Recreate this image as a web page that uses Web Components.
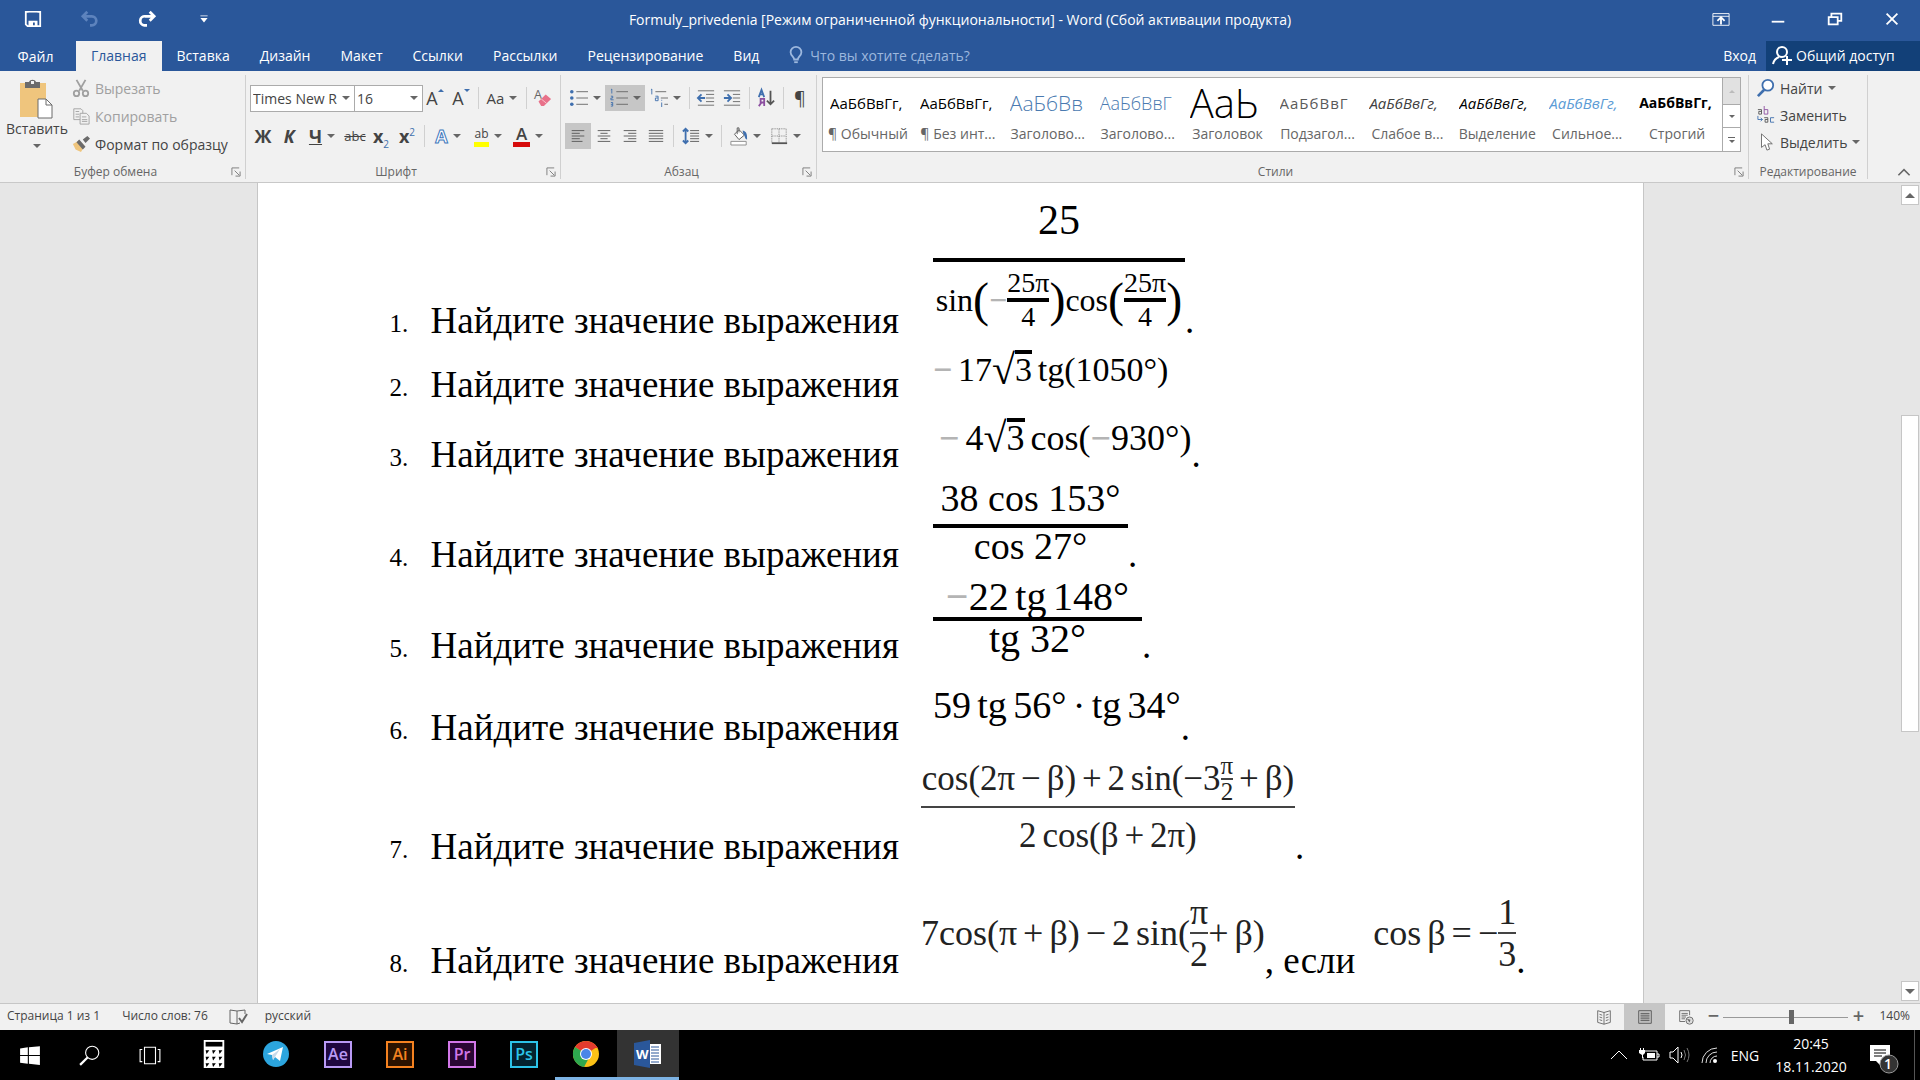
<!DOCTYPE html>
<html lang="ru">
<head>
<meta charset="utf-8">
<title>Formuly_privedenia - Word</title>
<style>
  html, body {
    margin: 0;
    height: 100%;
    overflow: hidden;
  }
  body {
    font-family: "Open Sans", "Noto Sans", sans-serif;
    font-size: 14px;
    color: #444;
  }
</style>
</head>
<body>
<word-app></word-app>

<script>
const ICONS = {
  save: '<path d="M2 2h16v16H4l-2-2z" fill="none" stroke="#fff" stroke-width="2"/><path d="M5 3h10v6H5z" fill="#2a579a"/><path d="M5 12h10v6h-3v-4h-2v4H5z" fill="#fff"/>',
  undo: '<path d="M3 7h9a5 5 0 0 1 0 10h-2M7 2L2 7l5 5" fill="none" stroke="#5d83bd" stroke-width="3"/>',
  redo: '<path d="M17 7H8a5 5 0 0 0-1 10h3M13 2l5 5-5 5" fill="none" stroke="#fff" stroke-width="3"/>',
  custom: '<path d="M6 6h8v1H6zM6 9h8l-4 5z" fill="#fff"/>',
  ribbonopt: '<path d="M1 4h18v13H1zM1 7h18" fill="none" stroke="#fff"/><path d="M10 16V9M6 12l4-4 4 4" fill="none" stroke="#fff" stroke-width="2"/>',
  min: '<path d="M3 12h14v2H3z" fill="#fff"/>',
  restore: '<path d="M3 8h10v8H3zM6 8V4h11v8h-4" fill="none" stroke="#fff" stroke-width="2"/>',
  close: '<path d="M4 4l12 12M16 4L4 16" stroke="#fff" stroke-width="2"/>',
  bulb: '<path d="M8 15c0-3-4-4-4-8a6 6 0 0 1 12 0c0 4-4 5-4 8z" fill="none" stroke="#9db8de" stroke-width="2"/><path d="M8 17h4v2H8z" fill="#9db8de"/>',
  person: '<circle cx="10" cy="7" r="5" fill="none" stroke="#fff" stroke-width="2"/><path d="M1 19c1-4 3-6 6-7M15 11v9M10 15h10" fill="none" stroke="#fff" stroke-width="2"/>',
  paste: '<path d="M3 4h26v34H3z" fill="#efc57d" /><path d="M8 3h4c1-3 6-3 7 0h4v6H8z" fill="#6b6b6b"/><path d="M14 2h3v3h-3z" fill="#f1f1f1"/><path d="M21 20h8l6 6v13H21z" fill="#fff" stroke="#6b6b6b"/><path d="M29 20v6h6" fill="none" stroke="#6b6b6b"/>',
  cut: '<g fill="none" stroke="#a0a0a0" stroke-width="2"><path d="M5 1l7 12M15 1L8 13"/><circle cx="5" cy="16" r="3"/><circle cx="15" cy="16" r="3"/></g>',
  copy: '<g fill="#f1f1f1" stroke="#a0a0a0"><path d="M2 2h8l2 2v10H2z"/><path d="M9 7h7l3 3v9H9z"/><path d="M4 5h4M4 8h4M4 11h4M11 11h5M11 14h6M11 16h6"/></g>',
  brush: '<path d="M1 10l7-4 6 6-4 7-6-3z" fill="#efc57d"/><path d="M8 5l7 8-3 3-7-8zM12 5l5-4 3 3-5 5z" fill="#6b6b6b"/>',
  clear: '<text x="0" y="11" font-size="14" fill="#666">A</text><path d="M5 14l8-8 6 5-8 8H8z" fill="#e8718a"/><path d="M8 11l6 5" stroke="#f8c8d0"/>',
  bullets: '<g fill="#3f6fae"><circle cx="2" cy="3" r="2"/><circle cx="2" cy="10" r="2"/><circle cx="2" cy="17" r="2"/></g><path d="M7 3h13M7 10h13M7 17h13" stroke="#666"/>',
  numbers: '<path d="M2 0v5M1 1l1-1M1 8h2v2H1v2h3M1 15h2v4H1M1 17h2" fill="none" stroke="#3f6fae"/><path d="M7 3h13M7 10h13M7 17h13" stroke="#666"/>',
  multi: '<path d="M2 0v6M1 1l1-1M6 8h3v5H6v-3h3M13 15v5M13 12v1" fill="none" stroke="#3f6fae"/><path d="M6 3h12M12 10h8M16 17h4" stroke="#666"/>',
  outdent: '<path d="M1 2h18M10 6h9M10 10h9M10 14h9M1 18h18" stroke="#666"/><path d="M9 10H2M5 6l-4 4 4 4" stroke="#3f6fae" stroke-width="2" fill="none"/>',
  indent: '<path d="M1 2h18M11 6h8M11 10h8M11 14h8M1 18h18" stroke="#666"/><path d="M1 10h7M5 6l4 4-4 4" stroke="#3f6fae" stroke-width="2" fill="none"/>',
  sort: '<path d="M2 9l3-8 3 8M3 6h4" stroke="#3f6fae" stroke-width="2" fill="none"/><path d="M8 19v-8H4v4h4M5 15l-3 4" stroke="#8c4fa0" stroke-width="2" fill="none"/><path d="M15 2v15M11 13l4 4 4-4" stroke="#555" stroke-width="2" fill="none"/>',
  left: '<path d="M3 4h14M3 7h9M3 10h14M3 13h9M3 16h12" stroke="#555"/>',
  center: '<path d="M3 4h14M6 7h8M3 10h14M6 13h8M3 16h14" stroke="#555"/>',
  right: '<path d="M3 4h14M8 7h9M3 10h14M8 13h9M3 16h14" stroke="#555"/>',
  justify: '<path d="M2 4h16M2 7h16M2 10h16M2 13h16M2 16h16" stroke="#555"/>',
  spacing: '<path d="M4 2v16M1 5l3-3 3 3M1 15l3 3 3-3" stroke="#3f6fae" stroke-width="2" fill="none"/><path d="M9 4h10M9 7h10M9 10h10M9 13h10M9 16h10" stroke="#555"/>',
  shading: '<path d="M5 8l5-5 6 6-6 5z" fill="#fff" stroke="#555"/><path d="M8 8V1h2v5" fill="none" stroke="#555"/><path d="M14 4c5 1 5 5 5 10-3-1-2-4-4-6z" fill="#3f6fae"/><path d="M1 16h17v4H1z" fill="#fff" stroke="#888"/>',
  borders: '<path d="M2 2h16v16M2 2v16M10 2v16M2 10h16" fill="none" stroke="#777" stroke-dasharray="1 1"/><path d="M2 18h17" stroke="#555" stroke-width="2"/>',
  find: '<circle cx="12" cy="7" r="6" fill="#fff" stroke="#3f6fae" stroke-width="2"/><path d="M8 12l-7 7" stroke="#3f6fae" stroke-width="3"/>',
  replace: '<g fill="none"><path d="M1 4h4v5H2V6h3" stroke="#555"/><path d="M8 0v9h4V4H8" stroke="#8c4fa0"/><path d="M8 13h4v5H9v-3h3" stroke="#555"/><path d="M19 13h-4v5h4M1 11v4h5M4 13l2 2-2 2" stroke="#3f6fae"/></g>',
  cursor: '<path d="M5 1v15l4-3 2 6 3-1-2-6h5z" fill="#fff" stroke="#666"/>',
  launcher: '<path d="M1 9V1h8" fill="none" stroke="#777"/><path d="M4 4l5 5M10 5v5H5" fill="none" stroke="#777"/>',
  caretup: '<path d="M3 14l7-7 7 7" fill="none" stroke="#666" stroke-width="2"/>',
  proof: '<path d="M9 4L2 3v13l7 1zM9 4l8-1v4M9 17l3-1" fill="none" stroke="#666"/><path d="M11 11l3 4 5-8" fill="none" stroke="#666" stroke-width="2"/>',
  read: '<path d="M10 5L3 3v13l7 2 7-2V3zM10 5v13M5 7l3 1M5 10l3 1M5 13l3 1M15 7l-3 1M15 10l-3 1M15 13l-3 1" fill="none" stroke="#666"/>',
  print: '<path d="M3 3h14v14H3zM5 6h10M5 8h10M5 10h10M5 12h10M5 14h10" fill="none" stroke="#555"/>',
  web: '<path d="M14 8V3H3v12h6M5 6h7M5 8h7M5 10h5M5 12h4" fill="none" stroke="#666"/><circle cx="14" cy="14" r="4" fill="#ddd" stroke="#666"/><path d="M11 12l4 1-1 3z" fill="#666"/>',
  start: '<path d="M1 4l7-1v7H1zM9 3l10-1v8H9zM1 11h7v7l-7-1zM9 11h10v8L9 18z" fill="#fff"/>',
  search: '<circle cx="12" cy="8" r="6" fill="none" stroke="#fff"/><path d="M8 12l-7 7" stroke="#fff" stroke-width="2"/>',
  tasks: '<path d="M5 3h10v15H5zM3 5H1v11h2M17 5h2v11h-2" fill="none" stroke="#fff"/>',
  calc: '<path d="M4 0h22v30H4z" fill="#fff"/><path d="M6 2h18v5H6z" fill="#000"/><path d="M6 11h4l-3 4zM13 11h4l-3 4zM20 11h4l-3 4zM6 18h4l-3 4zM13 18h4l-3 4zM20 18h4l-3 4zM6 25h4l-3 4zM13 25h4l-3 4zM20 25h4l-3 4z" fill="#000"/>',
  telegram: '<circle cx="14" cy="14" r="13" fill="#2ca5de"/><path d="M5 14l16-7-3 14-5-4-2 3-1-5z" fill="#fff"/><path d="M10 15l8-6-5 8-2 3z" fill="#c8daea"/>',
  chrome: '<circle cx="14" cy="14" r="13" fill="#fbc116"/><path d="M14 14L3 7a13 13 0 0 1 22 0z" fill="#e33b2e"/><path d="M14 14L3 7a13 13 0 0 0 9 20l6-11z" fill="#2ea84f"/><path d="M14 8h12L24 6 8 5z" fill="#e33b2e"/><circle cx="14" cy="14" r="6" fill="#fff"/><circle cx="14" cy="14" r="5" fill="#4a86e8"/>',
  word: '<path d="M14 4h13v20H14z" fill="#fff"/><path d="M17 7h8M17 10h8M17 13h8M17 16h8M17 19h8M17 22h8" stroke="#2a579a"/><path d="M0 3l16-3v28L0 25z" fill="#2a579a"/><text x="2" y="19" font-size="13" font-weight="700" fill="#fff">W</text>',
  battery: '<path d="M6 6h12v9H4v-3M18 9h2v3h-2" fill="none" stroke="#fff"/><path d="M8 8h8v5H8zM0 5h6v3l-2 2v3H3v-3L0 8zM1 3h1v2H1zM4 3h1v2H4z" fill="#fff"/>',
  volume: '<path d="M1 7h3l5-5v16l-5-5H1z" fill="none" stroke="#fff"/><path d="M12 7q2 3 0 6" fill="none" stroke="#fff"/><path d="M15 5q3 5 0 10M18 3q4 7 0 14" fill="none" stroke="#777"/>',
  wifi: '<g fill="none" stroke="#ddd"><path d="M3 18A15 15 0 0 1 18 3M7 18A11 11 0 0 1 18 7M11 18a7 7 0 0 1 7-7"/></g><circle cx="16" cy="16" r="2" fill="#fff"/>',
  traycaret: '<path d="M2 14l8-8 8 8" fill="none" stroke="#fff"/>',
  notes: '<path d="M0 1h20v16h-9v5l-5-5H0z" fill="#fff"/><path d="M4 6h12M4 9h12M4 12h8" stroke="#000"/><circle cx="19" cy="20" r="9" fill="#333" stroke="#999"/>',
};

// Inline picture, size comes from --icon (20px by default)
class UiIcon extends HTMLElement {
  constructor() {
    super();
    this.attachShadow({ mode: 'open' });
  }

  connectedCallback() {
    const box = this.getAttribute('box') || '20';
    this.shadowRoot.innerHTML = `
      <style>
        :host { display: inline-flex; flex: none; width: var(--icon, 20px); height: var(--icon, 20px); }
        svg { width: 100%; height: 100%; display: block; overflow: visible; font-family: inherit; }
      </style>
      <svg viewBox="0 0 ${box} ${box}" aria-hidden="true">${ICONS[this.getAttribute('name')]}</svg>
    `;
  }
}
customElements.define('ui-icon', UiIcon);

class ToolButton extends HTMLElement {
  constructor() {
    super();
    this.attachShadow({ mode: 'open' });
    this.shadowRoot.innerHTML = `
      <style>
        :host { display: inline-flex; flex: none; --icon: 18px; }
        button {
          display: flex;
          align-items: center;
          justify-content: center;
          width: 26px;
          height: 26px;
          padding: 0;
          border: 0;
          background: none;
          font: inherit;
          font-size: 18px;
          color: inherit;
        }
        :host([arrow]) button { width: 40px; gap: 5px; }
        :host([active]) button { background: #c6c6c6; }
        :host([wide]) button { width: auto; font-size: 14px; gap: 5px; }
        :host([disabled]) button { color: #a0a0a0; }
        i { display: none; border: 4px solid transparent; border-top-color: #666; border-bottom: 0; }
        :host([arrow]) i { display: block; }
      </style>
      <button type="button"><slot></slot><i></i></button>
    `;
  }

  connectedCallback() {
    const label = this.getAttribute('label');
    const button = this.shadowRoot.querySelector('button');
    if (label) button.setAttribute('aria-label', label);
    button.disabled = this.hasAttribute('disabled');
  }
}
customElements.define('tool-button', ToolButton);

class RibbonGroup extends HTMLElement {
  constructor() {
    super();
    this.attachShadow({ mode: 'open' });
    this.shadowRoot.innerHTML = `
      <style>
        :host {
          display: flex;
          flex-direction: column;
          flex: none;
          box-sizing: border-box;
          margin: 4px 0 3px;
          border-right: 1px solid #d0d0d0;
        }
        .body { flex: 1; }
        footer { display: flex; align-items: center; height: 14px; line-height: 14px; font-size: 12px; color: #666; }
        footer span { flex: 1; text-align: center; }
        ui-icon { --icon: 10px; margin-right: 4px; }
        :host([plain]) ui-icon { display: none; }
      </style>
      <div class="body"><slot></slot></div>
      <footer><span></span><ui-icon name="launcher" box="11"></ui-icon></footer>
    `;
  }

  connectedCallback() {
    this.shadowRoot.querySelector('span').textContent = this.getAttribute('label');
  }
}
customElements.define('ribbon-group', RibbonGroup);

class StyleTile extends HTMLElement {
  constructor() {
    super();
    this.attachShadow({ mode: 'open' });
  }

  connectedCallback() {
    this.shadowRoot.innerHTML = `
      <style>
        :host { display: block; flex: 1 1 90px; min-width: 0; color: #000; font-size: 15px; }
        button {
          width: 100%;
          height: 100%;
          padding: 0 4px;
          border: 0;
          background: none;
          font: inherit;
          letter-spacing: inherit;
          color: inherit;
        }
        b { display: block; height: 42px; line-height: 42px; margin: 3px 3px 0; overflow: hidden; white-space: nowrap; font-weight: inherit; text-align: left; }
        span { display: block; height: 26px; line-height: 20px; font-size: 14px; font-weight: 400; font-style: normal; letter-spacing: normal; color: #666; white-space: nowrap; }
      </style>
      <button type="button"><b><slot></slot></b><span>${this.getAttribute('name')}</span></button>
    `;
  }
}
customElements.define('style-tile', StyleTile);

class TitleBar extends HTMLElement {
  constructor() {
    super();
    this.attachShadow({ mode: 'open' });
    this.shadowRoot.innerHTML = `
      <style>
        :host { display: grid; grid-template-columns: 1fr auto 1fr; align-items: center; height: 41px; background: #2a579a; color: #fff; }
        button { border: 0; padding: 0; background: none; --icon: 18px; width: 57px; height: 38px; }
        .quick { display: flex; padding-left: 4px; }
        .window { display: flex; justify-content: flex-end; }
        h1 { margin: 0 0 2px; font-size: 14px; font-weight: 400; white-space: nowrap; }
      </style>
      <div class="quick">
        <button aria-label="Сохранить"><ui-icon name="save"></ui-icon></button>
        <button aria-label="Отменить"><ui-icon name="undo"></ui-icon></button>
        <button aria-label="Повторить"><ui-icon name="redo"></ui-icon></button>
        <button aria-label="Настройка панели"><ui-icon name="custom"></ui-icon></button>
      </div>
      <h1>Formuly_privedenia [Режим ограниченной функциональности] - Word (Сбой активации продукта)</h1>
      <div class="window">
        <button aria-label="Параметры ленты"><ui-icon name="ribbonopt"></ui-icon></button>
        <button aria-label="Свернуть"><ui-icon name="min"></ui-icon></button>
        <button aria-label="Восстановить"><ui-icon name="restore"></ui-icon></button>
        <button aria-label="Закрыть"><ui-icon name="close"></ui-icon></button>
      </div>
    `;
  }
}
customElements.define('title-bar', TitleBar);

class RibbonTabs extends HTMLElement {
  constructor() {
    super();
    this.attachShadow({ mode: 'open' });
    this.shadowRoot.innerHTML = `
      <style>
        :host { display: flex; height: 30px; background: #2a579a; color: #fff; }
        button { border: 0; padding: 0 15px 2px; background: none; font: inherit; color: inherit; white-space: nowrap; }
        .file { width: 76px; padding: 0 22px 0 17px; }
        .active { background: #f1f1f1; color: #2a579a; }
        label { display: flex; align-items: center; gap: 5px; flex: 1; padding: 0 0 2px 13px; --icon: 18px; }
        input { width: 200px; border: 0; padding: 0; background: none; font: inherit; color: #fff; }
        input::placeholder { color: #9db8de; opacity: 1; }
        .signin { padding: 0 10px 2px; }
        .share { display: flex; align-items: center; gap: 4px; width: 154px; padding: 0 6px 2px; background: #124078; }
      </style>
      <button class="file">Файл</button>
      <button class="active">Главная</button>
      <button>Вставка</button>
      <button>Дизайн</button>
      <button>Макет</button>
      <button>Ссылки</button>
      <button>Рассылки</button>
      <button>Рецензирование</button>
      <button>Вид</button>
      <label><ui-icon name="bulb"></ui-icon><input aria-label="Помощник" placeholder="Что вы хотите сделать?"></label>
      <button class="signin">Вход</button>
      <button class="share"><ui-icon name="person"></ui-icon>Общий доступ</button>
    `;
  }
}
customElements.define('ribbon-tabs', RibbonTabs);

class RibbonPanel extends HTMLElement {
  constructor() {
    super();
    this.attachShadow({ mode: 'open' });
    this.shadowRoot.innerHTML = `
      <style>
        :host { display: flex; height: 111px; background: #f1f1f1; border-bottom: 1px solid #c8c8c8; }
        .row { display: flex; align-items: center; height: 26px; margin-top: 10px; padding-left: 4px; }
        .row + .row { margin-top: 12px; }
        .sep { width: 1px; height: 22px; margin: 0 3px 0 4px; background: #d0d0d0; }

        .clipboard { width: 246px; }
        .clip { display: flex; }
        .paste {
          display: flex;
          flex-direction: column;
          align-items: center;
          width: 72px;
          padding: 4px 0 0 2px;
          border: 0;
          background: none;
          font: inherit;
          color: inherit;
          --icon: 40px;
        }
        .paste i { margin-top: 6px; border: 4px solid transparent; border-top-color: #666; border-bottom: 0; }
        .col { display: flex; flex-direction: column; align-items: flex-start; gap: 2px; }

        .font { width: 315px; }
        select {
          height: 27px;
          box-sizing: border-box;
          border: 1px solid #ababab;
          padding: 0 4px 0 2px;
          appearance: none;
          border-radius: 0;
          background: #fff;
          font: inherit;
          color: #444;
        }
        .combo { position: relative; display: flex; margin-right: -1px; }
        .combo::after { content: ""; position: absolute; right: 5px; top: 11px; border: 4px solid transparent; border-top-color: #666; border-bottom: 0; }
        .face { width: 105px; }
        .size { width: 69px; }
        sup, sub { font-size: 10px; color: #3f6fae; line-height: 0; }
        .case { font-size: 15px; }
        .up, .down { align-self: flex-start; margin-top: 4px; border: 3px solid transparent; border-top: 0; border-bottom-color: #3f6fae; }
        .down { border-top: 3px solid #3f6fae; border-bottom: 0; }
        .strike { font-size: 13px; text-decoration: line-through; }
        .outline { color: #fff; -webkit-text-stroke: 1px #3f79bd; font-weight: 700; }
        .mark { font-size: 12px; line-height: 16px; border-bottom: 5px solid #ff0; }
        .tint { font-size: 17px; line-height: 17px; padding: 0 3px; font-weight: 600; border-bottom: 5px solid #d60b0b; }

        .para { width: 256px; }
        .styles { flex: 1 1 0; min-width: 0; }
        .gallery { display: flex; height: 75px; margin: 2px 7px 0 5px; background: #fff; border: 1px solid #ababab; box-sizing: border-box; }
        .scroll { display: grid; grid-template-rows: 26px 23px 1fr; width: 17px; border-left: 1px solid #ababab; }
        .scroll button { border: 0; border-top: 1px solid #ababab; padding: 0; background: #fff; color: #666; display: grid; place-content: center; justify-items: center; }
        .scroll button:first-child { background: #e1e1e1; border-top: 0; }
        .scroll i { border: 3px solid transparent; border-top-color: #666; border-bottom: 0; }
        .scroll button:first-child i { border-top: 0; border-bottom: 3px solid #bbb; }
        .scroll button:last-child::before { content: ""; width: 7px; height: 1px; margin-bottom: 2px; background: #666; }

        .edit { width: 119px; }
        .edit .col { padding: 0 0 0 8px; gap: 1px; }
        .collapse { flex: none; width: 52px; display: flex; align-items: flex-end; justify-content: center; padding: 0 0 2px 20px; box-sizing: border-box; border: 0; background: none; --icon: 16px; }
      </style>

      <ribbon-group class="clipboard" label="Буфер обмена">
        <div class="clip">
          <button class="paste"><ui-icon name="paste" box="40"></ui-icon>Вставить<i></i></button>
          <div class="col">
            <tool-button wide disabled><ui-icon name="cut"></ui-icon>Вырезать</tool-button>
            <tool-button wide disabled><ui-icon name="copy"></ui-icon>Копировать</tool-button>
            <tool-button wide><ui-icon name="brush"></ui-icon>Формат по образцу</tool-button>
          </div>
        </div>
      </ribbon-group>

      <ribbon-group class="font" label="Шрифт">
        <div class="row">
          <span class="combo"><select class="face" aria-label="Шрифт"><option>Times New R</option></select></span>
          <span class="combo"><select class="size" aria-label="Размер"><option>16</option></select></span>
          <tool-button label="Увеличить">A<span class="up"></span></tool-button>
          <tool-button label="Уменьшить">A<span class="down"></span></tool-button>
          <span class="sep"></span>
          <tool-button arrow label="Регистр"><span class="case">Aa</span></tool-button>
          <span class="sep"></span>
          <tool-button label="Очистить формат"><ui-icon name="clear"></ui-icon></tool-button>
        </div>
        <div class="row">
          <tool-button label="Полужирный"><b>Ж</b></tool-button>
          <tool-button label="Курсив"><b><i>К</i></b></tool-button>
          <tool-button arrow label="Подчеркнутый"><b><u>Ч</u></b></tool-button>
          <tool-button label="Зачеркнутый"><span class="strike">abc</span></tool-button>
          <tool-button label="Подстрочный"><span><b>x</b><sub>2</sub></span></tool-button>
          <tool-button label="Надстрочный"><span><b>x</b><sup>2</sup></span></tool-button>
          <span class="sep"></span>
          <tool-button arrow label="Эффекты"><span class="outline">A</span></tool-button>
          <tool-button arrow label="Выделение цветом"><span class="mark">ab</span></tool-button>
          <tool-button arrow label="Цвет текста"><span class="tint">A</span></tool-button>
        </div>
      </ribbon-group>

      <ribbon-group class="para" label="Абзац">
        <div class="row">
          <tool-button arrow label="Маркеры"><ui-icon name="bullets"></ui-icon></tool-button>
          <tool-button arrow active label="Нумерация"><ui-icon name="numbers"></ui-icon></tool-button>
          <tool-button arrow label="Многоуровневый список"><ui-icon name="multi"></ui-icon></tool-button>
          <span class="sep"></span>
          <tool-button label="Уменьшить отступ"><ui-icon name="outdent"></ui-icon></tool-button>
          <tool-button label="Увеличить отступ"><ui-icon name="indent"></ui-icon></tool-button>
          <span class="sep"></span>
          <tool-button label="Сортировка"><ui-icon name="sort"></ui-icon></tool-button>
          <span class="sep"></span>
          <tool-button label="Все знаки">¶</tool-button>
        </div>
        <div class="row">
          <tool-button active label="По левому краю"><ui-icon name="left"></ui-icon></tool-button>
          <tool-button label="По центру"><ui-icon name="center"></ui-icon></tool-button>
          <tool-button label="По правому краю"><ui-icon name="right"></ui-icon></tool-button>
          <tool-button label="По ширине"><ui-icon name="justify"></ui-icon></tool-button>
          <span class="sep"></span>
          <tool-button arrow label="Интервал"><ui-icon name="spacing"></ui-icon></tool-button>
          <span class="sep"></span>
          <tool-button arrow label="Заливка"><ui-icon name="shading"></ui-icon></tool-button>
          <tool-button arrow label="Границы"><ui-icon name="borders"></ui-icon></tool-button>
        </div>
      </ribbon-group>

      <ribbon-group class="styles" label="Стили">
        <div class="gallery">
          <style-tile name="¶ Обычный">АаБбВвГг,</style-tile>
          <style-tile name="¶ Без инт...">АаБбВвГг,</style-tile>
          <style-tile name="Заголово..." style="color:#4a7ab0;font-size:21px;font-weight:300">АаБбВв</style-tile>
          <style-tile name="Заголово..." style="color:#4a7ab0;font-size:18px;font-weight:300">АаБбВвГ</style-tile>
          <style-tile name="Заголовок" style="font-size:40px;font-weight:300">АаЬ</style-tile>
          <style-tile name="Подзагол..." style="color:#5a5a5a;letter-spacing:1px">АаБбВвГ</style-tile>
          <style-tile name="Слабое в..." style="color:#404040;font-style:italic">АаБбВвГг,</style-tile>
          <style-tile name="Выделение" style="font-style:italic">АаБбВвГг,</style-tile>
          <style-tile name="Сильное..." style="color:#5b9bd5;font-style:italic">АаБбВвГг,</style-tile>
          <style-tile name="Строгий" style="font-size:14px;font-weight:700">АаБбВвГг,</style-tile>
          <div class="scroll">
            <button aria-label="Вверх"><i></i></button>
            <button aria-label="Вниз"><i></i></button>
            <button aria-label="Еще"><i></i></button>
          </div>
        </div>
      </ribbon-group>

      <ribbon-group class="edit" label="Редактирование" plain>
        <div class="col">
          <tool-button wide arrow><ui-icon name="find"></ui-icon>Найти</tool-button>
          <tool-button wide><ui-icon name="replace"></ui-icon>Заменить</tool-button>
          <tool-button wide arrow><ui-icon name="cursor"></ui-icon>Выделить</tool-button>
        </div>
      </ribbon-group>
      <button class="collapse" aria-label="Свернуть ленту"><ui-icon name="caretup"></ui-icon></button>
    `;
  }
}
customElements.define('ribbon-panel', RibbonPanel);

// One line of a formula: everything is centred on the fraction bar
class MathLine extends HTMLElement {
  constructor() {
    super();
    this.attachShadow({ mode: 'open' });
    this.shadowRoot.innerHTML = `
      <style>
        :host { display: inline-flex; align-items: center; justify-content: center; white-space: pre; line-height: 40px; }
        ::slotted(s) { text-decoration: none; color: #b4b4b4; font-weight: 700; }
        ::slotted(big) { font-size: 48px; }
      </style>
      <slot></slot>
    `;
  }
}
customElements.define('math-line', MathLine);

class MathFrac extends HTMLElement {
  constructor() {
    super();
    this.attachShadow({ mode: 'open' });
    this.shadowRoot.innerHTML = `
      <style>
        :host { display: inline-flex; flex-direction: column; align-items: stretch; text-align: center; line-height: var(--line, 30px); }
        hr { width: 100%; height: var(--bar, 2px); margin: var(--above, 0) 0 var(--below, 0); border: 0; background: var(--ink, #000); }
      </style>
      <slot name="top"></slot><hr><slot name="bottom"></slot>
    `;
  }
}
customElements.define('math-frac', MathFrac);

class MathRoot extends HTMLElement {
  constructor() {
    super();
    this.attachShadow({ mode: 'open' });
    this.shadowRoot.innerHTML = `
      <style>
        :host { display: inline-flex; align-items: flex-start; }
        i { font-style: normal; font-size: 42px; line-height: 40px; }
        span { border-top: 4px solid #000; line-height: 32px; }
      </style>
      <i>√</i><span><slot></slot></span>
    `;
  }
}
customElements.define('math-root', MathRoot);

class TaskRow extends HTMLElement {
  constructor() {
    super();
    this.attachShadow({ mode: 'open' });
    this.shadowRoot.innerHTML = `
      <style>
        :host { display: flex; align-items: flex-end; min-height: var(--step); line-height: 42px; white-space: pre; }
        .no { width: 41px; flex: none; font-size: 25px; line-height: 36px; }
        ::slotted(math-line), ::slotted(math-frac) { margin-bottom: var(--drop, 8px); font-size: var(--size, 34px); margin-left: 34px; }
        ::slotted(.near) { margin-left: 22px; }
        ::slotted(.next) { margin-left: 18px; }
      </style>
      <span class="no"></span><span>Найдите значение выражения</span><slot></slot>
    `;
  }

  connectedCallback() {
    this.shadowRoot.querySelector('.no').textContent = `${this.getAttribute('no')}.`;
  }
}
customElements.define('task-row', TaskRow);

class WordDocument extends HTMLElement {
  constructor() {
    super();
    this.attachShadow({ mode: 'open' });
    this.shadowRoot.innerHTML = `
      <style>
        :host { display: flex; flex: 1; min-height: 0; background: #e6e6e6; }
        .area { flex: 1; display: flex; justify-content: center; overflow: hidden; }
        .page {
          flex: none;
          width: 73%;
          box-sizing: border-box;
          padding-left: 132px;
          background: #fff;
          border: solid #c6c6c6;
          border-width: 0 1px;
          font-family: "Liberation Serif", serif;
          font-size: 37px;
          color: #000;
        }
        .big { --bar: 4px; --line: 36px; }
        .inner { --bar: 4px; --line: 30px; --above: 0; --below: 0; font-size: 28px; }
        .thin { --bar: 2px; --ink: #444; --above: 0; --below: 0; }
        .head { font-size: 42px; }
        .grey { color: #222; }
        .bar { display: flex; flex-direction: column; width: 20px; background: #e6e6e6; }
        .bar button { height: 20px; margin: 2px 1px; border: 1px solid #c6c6c6; background: #fff; padding: 0; display: grid; place-content: center; }
        .bar i { border: 5px solid transparent; border-bottom-color: #666; border-top: 0; }
        .bar .down i { border: 5px solid transparent; border-top-color: #666; border-bottom: 0; }
        .track { flex: 1; display: grid; grid-template-rows: 27fr 41fr 32fr; }
        .thumb { grid-row: 2; margin: 0 1px; border: 1px solid #c6c6c6; background: #fff; }
      </style>
      <div class="area"><div class="page">
        <task-row no="1" style="--step:159px">
          <math-frac class="big" style="--size:32px;--drop:10px;--above:20px;--below:6px;width:252px">
            <span slot="top" class="head">25</span>
            <math-line slot="bottom">sin<big>(</big><s>−</s><math-frac class="inner"><span slot="top">25π</span><span slot="bottom">4</span></math-frac><big>)</big>cos<big>(</big><math-frac class="inner"><span slot="top">25π</span><span slot="bottom">4</span></math-frac><big>)</big></math-line>
          </math-frac><span>.</span>
        </task-row>
        <task-row no="2" style="--step:64px;--drop:16px">
          <math-line><s>−</s> 17<math-root>3</math-root> tg(1050°)</math-line>
        </task-row>
        <task-row no="3" style="--step:70px;--drop:18px;--size:36px">
          <math-line> <s>−</s> 4<math-root>3</math-root> cos(<s>−</s>930°)</math-line><span>.</span>
        </task-row>
        <task-row no="4" style="--step:100px;--drop:12px">
          <math-frac class="big" style="--size:38px;--above:8px;width:195px"><span slot="top">38 cos 153°</span><span slot="bottom">cos 27°</span></math-frac><span>.</span>
        </task-row>
        <task-row no="5" style="--step:91px;--drop:10px">
          <math-frac class="big" style="--size:40px;width:209px"><math-line slot="top"><s>−</s>22 tg 148°</math-line><span slot="bottom">tg 32°</span></math-frac><span>.</span>
        </task-row>
        <task-row no="6" style="--step:82px;--drop:24px;--size:38px">
          <math-line>59 tg 56° · tg 34°</math-line><span>.</span>
        </task-row>
        <task-row no="7" style="--step:119px;--drop:12px;--size:35px">
          <math-frac class="near grey" style="--ink:#444;--above:2px;--below:8px;width:374px">
            <math-line slot="top">cos(2π − β) + 2 sin(−3<math-frac class="thin" style="--line:24px;font-size:25px"><span slot="top">π</span><span slot="bottom">2</span></math-frac> + β)</math-line>
            <math-line slot="bottom">2 cos(β + 2π)</math-line>
          </math-frac><span>.</span>
        </task-row>
        <task-row no="8" style="--step:114px;--drop:8px;--size:36px">
          <math-line class="near grey">7cos(π + β) − 2 sin(<math-frac class="thin" style="--line:40px"><span slot="top">π</span><span slot="bottom">2</span></math-frac>+ β)</math-line><span>, если</span>
          <math-line class="next grey">cos β = −<math-frac class="thin" style="--line:40px"><span slot="top">1</span><span slot="bottom">3</span></math-frac></math-line><span>.</span>
        </task-row>
      </div></div>
      <div class="bar">
        <button aria-label="Прокрутить вверх"><i></i></button>
        <div class="track"><div class="thumb"></div></div>
        <button class="down" aria-label="Прокрутить вниз"><i></i></button>
      </div>
    `;
    // source line breaks must not become spaces in the pre-formatted rows
    this.shadowRoot.querySelectorAll('task-row, math-frac').forEach((el) => {
      [...el.childNodes].forEach((n) => {
        if (n.nodeType === 3 && !n.data.trim()) n.remove();
      });
    });
    // pieces of a line are flex items, so plain text keeps its spaces in a span
    this.shadowRoot.querySelectorAll('math-line').forEach((el) => {
      [...el.childNodes].forEach((n) => {
        if (n.nodeType === 3) {
          const span = document.createElement('span');
          span.textContent = n.data.replace(/ /g, '\u2006');
          n.replaceWith(span);
        }
      });
    });
  }
}
customElements.define('word-document', WordDocument);

class StatusBar extends HTMLElement {
  constructor() {
    super();
    this.attachShadow({ mode: 'open' });
    this.shadowRoot.innerHTML = `
      <style>
        :host { display: flex; align-items: center; height: 27px; box-sizing: border-box; padding: 0 10px 0 7px; background: #f1f1f1; border-top: 1px solid #c6c6c6; font-size: 12px; line-height: 22px; white-space: nowrap; }
        span, output { padding-bottom: 2px; }
        .words { margin: 0 20px 0 22px; }
        .lang { flex: 1; margin-left: 17px; }
        button { width: 41px; height: 26px; border: 0; padding: 0; background: none; display: grid; place-content: center; --icon: 18px; }
        .on { background: #c6c6c6; }
        .sign { width: 14px; font-size: 20px; line-height: 20px; padding-bottom: 2px; font-weight: 600; color: #666; font-family: inherit; }
        input { width: 125px; margin: 0 3px; height: 16px; appearance: none; background: linear-gradient(#999, #999) no-repeat center / 100% 1px; }
        input::-webkit-slider-thumb { appearance: none; width: 5px; height: 14px; background: #666; }
        output { margin-left: 14px; }
      </style>
      <span>Страница 1 из 1</span><span class="words">Число слов: 76</span>
      <ui-icon name="proof"></ui-icon><span class="lang">русский</span>
      <button aria-label="Режим чтения"><ui-icon name="read"></ui-icon></button>
      <button class="on" aria-label="Разметка страницы"><ui-icon name="print"></ui-icon></button>
      <button aria-label="Веб-документ"><ui-icon name="web"></ui-icon></button>
      <button class="sign" aria-label="Уменьшить">−</button>
      <input type="range" min="0" max="100" value="55" aria-label="Масштаб">
      <button class="sign" aria-label="Увеличить">+</button>
      <output>140%</output>
    `;
  }
}
customElements.define('status-bar', StatusBar);

class TaskBar extends HTMLElement {
  constructor() {
    super();
    this.attachShadow({ mode: 'open' });
    this.shadowRoot.innerHTML = `
      <style>
        :host { display: flex; align-items: center; height: 50px; background: #000; color: #fff; }
        button { border: 0; padding: 0; background: none; height: 50px; width: 60px; display: grid; place-content: center; box-sizing: border-box; font: inherit; color: inherit; flex: none; --icon: 22px; }
        .app { width: 62px; border-bottom: 3px solid transparent; padding-top: 1px; --icon: 28px; }
        .calc { margin-left: 3px; }
        .run { border-bottom-color: #7db3e4; }
        .front { background: #333; }
        .adobe span { display: grid; place-content: center; width: 24px; height: 23px; border: 2px solid; font-size: 16px; font-weight: 600; }
        .fill { flex: 1; }
        .tray { width: 30px; --icon: 20px; }
        .lang { width: 42px; }
        .clock { width: 90px; text-align: center; line-height: 23px; }
        .notes { position: relative; width: 58px; padding-top: 8px; --icon: 30px; }
        .notes b { position: absolute; right: 22px; bottom: 8px; font-size: 14px; line-height: 16px; font-weight: 600; }
        .edge { width: 5px; height: 50px; border-left: 1px solid #555; }
      </style>
      <button aria-label="Пуск"><ui-icon name="start"></ui-icon></button>
      <button aria-label="Поиск"><ui-icon name="search"></ui-icon></button>
      <button aria-label="Представление задач"><ui-icon name="tasks"></ui-icon></button>
      <button class="app calc" aria-label="Калькулятор"><ui-icon name="calc" box="30"></ui-icon></button>
      <button class="app" aria-label="Telegram"><ui-icon name="telegram" box="28"></ui-icon></button>
      <button class="app adobe"><span style="color:#b99af5;background:#1f0740">Ae</span></button>
      <button class="app adobe"><span style="color:#f58220;background:#2b1200">Ai</span></button>
      <button class="app adobe"><span style="color:#d277e8;background:#2a0634">Pr</span></button>
      <button class="app adobe"><span style="color:#2cc3e8;background:#04222e">Ps</span></button>
      <button class="app run" aria-label="Chrome"><ui-icon name="chrome" box="28"></ui-icon></button>
      <button class="app run front" aria-label="Word"><ui-icon name="word" box="28"></ui-icon></button>
      <span class="fill"></span>
      <button class="tray" aria-label="Скрытые значки"><ui-icon name="traycaret"></ui-icon></button>
      <button class="tray" aria-label="Батарея"><ui-icon name="battery"></ui-icon></button>
      <button class="tray" aria-label="Громкость"><ui-icon name="volume"></ui-icon></button>
      <button class="tray" aria-label="Сеть"><ui-icon name="wifi"></ui-icon></button>
      <button class="lang">ENG</button>
      <div class="clock">20:45<br>18.11.2020</div>
      <button class="notes"><ui-icon name="notes" box="30"></ui-icon><b>1</b></button>
      <span class="edge"></span>
    `;
  }
}
customElements.define('task-bar', TaskBar);

class WordApp extends HTMLElement {
  constructor() {
    super();
    this.attachShadow({ mode: 'open' });
    this.shadowRoot.innerHTML = `
      <style>
        :host { display: flex; flex-direction: column; height: 100vh; }
      </style>
      <title-bar></title-bar>
      <ribbon-tabs></ribbon-tabs>
      <ribbon-panel></ribbon-panel>
      <word-document></word-document>
      <status-bar></status-bar>
      <task-bar></task-bar>
    `;
  }
}
customElements.define('word-app', WordApp);
</script>
</body>
</html>
